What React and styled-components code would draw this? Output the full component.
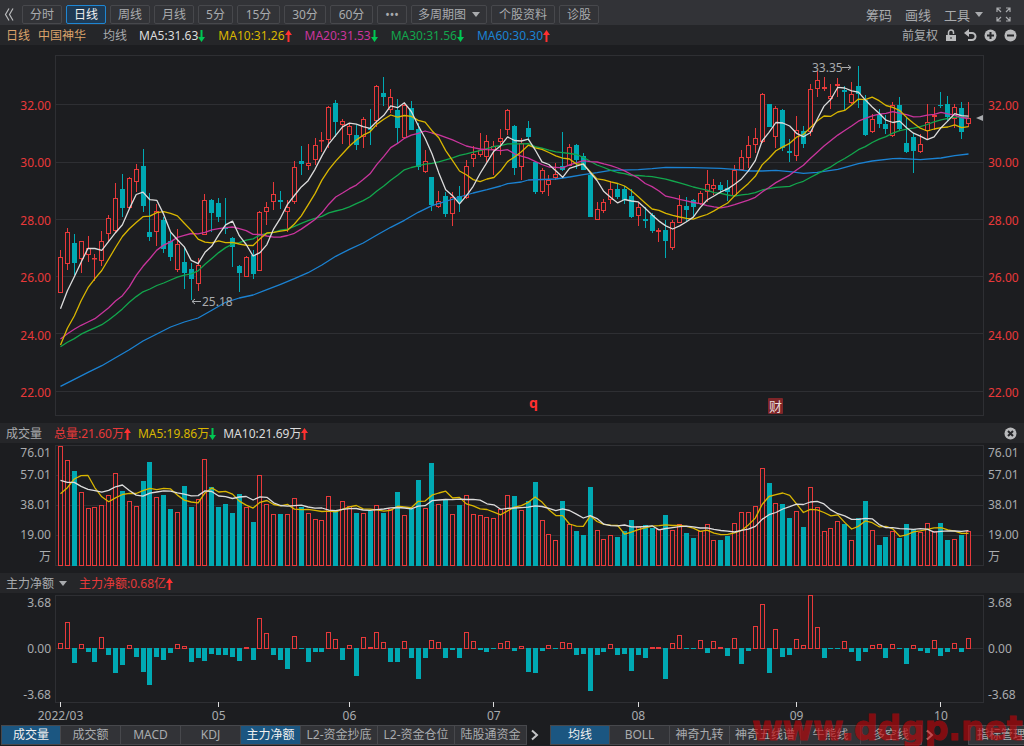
import React from 'react';
import styled, { createGlobalStyle, css } from 'styled-components';

const colors = {
  up: '#e8393a',
  down: '#00a9b3',
  text: '#a9abae',
  grid: '#2e2f33',
  yellow: '#d9b600',
  magenta: '#c9359d',
  green: '#12a74d',
  blue: '#1b82d2',
  white: '#dcdcdc'
};

const GlobalStyle = createGlobalStyle`
  * {
    box-sizing: border-box;
  }

  body {
    margin: 0;
    background: #1c1d20;
    color: ${colors.text};
    font: 12px/20px 'Noto Sans', 'Noto Sans CJK SC', sans-serif;
    overflow-x: hidden;
  }

  button {
    font: inherit;
    color: inherit;
    margin: 0;
    padding: 0;
    border: 0;
    background: none;
    white-space: nowrap;
    cursor: pointer;
  }
`;

const Page = styled.main`
  display: flex;
  flex-direction: column;
  min-height: 100vh;
  overflow: hidden;
`;

const Toolbar = styled.nav`
  display: flex;
  align-items: center;
  gap: 4px;
  height: 25px;
  padding: 4px 13px 0 4px;
  background: #323337;
`;

const CollapseButton = styled.button`
  display: flex;
  align-items: center;
  width: 14px;
  height: 19px;
`;

const PeriodButton = styled.button`
  display: flex;
  align-items: center;
  justify-content: center;
  gap: 6px;
  width: ${({ $width }) => $width}px;
  height: 19px;
  border: 1px solid #47484c;
  border-radius: 2px;
  ${({ $active }) => $active && css`
    border-color: #1e86d3;
    background: #1e3a54;
    color: #f0f0f0;
  `}
`;

const ToolGroup = styled.div`
  display: flex;
  align-items: center;
  gap: 13px;
  margin-left: auto;
  font-size: 13px;
`;

const ToolButton = styled.button`
  display: flex;
  align-items: center;
  gap: 5px;
`;

const Caret = styled.span`
  border: 4px solid transparent;
  border-top: 5px solid ${colors.text};
  border-bottom: 0;
`;

const InfoBar = styled.header`
  display: flex;
  align-items: center;
  gap: 12px;
  height: 20px;
  padding: 1px 7px 0 6px;
  background: #252629;
  white-space: nowrap;
`;

const StockName = styled.span`
  display: flex;
  gap: 8px;
  margin-right: 5px;
  color: #dba36b;
`;

const Legend = styled.div`
  display: flex;
  gap: ${({ $gap }) => $gap}px;
`;

const Value = styled.span`
  display: flex;
  align-items: center;
  color: ${({ $color }) => $color};
`;

const InfoActions = styled.div`
  display: flex;
  align-items: center;
  gap: 7px;
  margin-left: auto;
`;

const IconButton = styled.button`
  display: flex;
`;

const Panel = styled.section`
  display: grid;
  grid-template-columns: 55px minmax(0, 1fr) 40px;
  height: ${({ $height }) => $height}px;
`;

const Axis = styled.div`
  display: grid;
  align-items: center;
  align-content: ${({ $rows }) => ($rows ? 'start' : 'space-between')};
  grid-template-rows: ${({ $rows }) => $rows || 'none'};
  grid-auto-rows: 20px;
  padding: ${({ $top }) => $top || 0}px 4px ${({ $bottom }) => $bottom || 0}px;
  text-align: ${({ $side }) => $side};
  color: ${({ $color }) => $color || colors.text};
`;

const Plot = styled.svg`
  display: block;
  width: 100%;
  height: ${({ $height }) => $height}px;
  overflow: visible;
`;

const Footer = styled.footer`
  position: relative;
  display: flex;
  align-items: center;
  height: 20px;
  padding-left: 1px;
`;

const Tabs = styled.div`
  display: flex;
  flex: none;
  border: 1px solid #47484c;
`;

const Tab = styled.button`
  width: ${({ $width }) => $width}px;
  height: 18px;
  line-height: 18px;
  border-right: 1px solid #47484c;
  background: #323337;
  ${({ $active }) => $active && css`
    background: #1b5681;
    color: #f0f0f0;
  `}

  &:last-child {
    border-right: 0;
  }
`;

const MoreButton = styled.button`
  display: flex;
  flex: none;
  align-items: center;
  padding-left: 4px;
  width: ${({ $width }) => $width}px;
  height: 18px;
`;

const ManageButton = styled.button`
  flex: none;
  width: 66px;
  height: 20px;
  line-height: 18px;
  margin-left: 28px;
  border: 1px solid #47484c;
  background: #323337;
`;

const Watermark = styled.span`
  position: absolute;
  left: 752px;
  bottom: 0;
  color: #c00408;
  font: bold 33px/33px 'DejaVu Sans', sans-serif;
  -webkit-text-stroke: 1px #c00408;
  opacity: 0.62;
  pointer-events: none;
`;

const periods = [
  { label: '分时', width: 40 },
  { label: '日线', width: 40, active: true },
  { label: '周线', width: 40 },
  { label: '月线', width: 40 },
  { label: '5分', width: 35 },
  { label: '15分', width: 43 },
  { label: '30分', width: 42 },
  { label: '60分', width: 43 },
  { label: '•••', width: 30 },
  { label: '多周期图', width: 76, caret: true },
  { label: '个股资料', width: 64 },
  { label: '诊股', width: 40 }
];

const averages = [
  { label: 'MA5:31.63', color: colors.white },
  { label: 'MA10:31.26', color: colors.yellow, up: true },
  { label: 'MA20:31.53', color: colors.magenta },
  { label: 'MA30:31.56', color: colors.green },
  { label: 'MA60:30.30', color: colors.blue, up: true }
];

const volumeAverages = [
  { label: '总量:21.60万', color: colors.up, up: true },
  { label: 'MA5:19.86万', color: colors.yellow },
  { label: 'MA10:21.69万', color: colors.white, up: true }
];

const indicatorTabs = [
  { label: '成交量', width: 59, active: true },
  { label: '成交额', width: 60 },
  { label: 'MACD', width: 60 },
  { label: 'KDJ', width: 60 },
  { label: '主力净额', width: 60, active: true },
  { label: 'L2-资金抄底', width: 77 },
  { label: 'L2-资金仓位', width: 77 },
  { label: '陆股通资金', width: 71 }
];

const overlayTabs = [
  { label: '均线', width: 59, active: true },
  { label: 'BOLL', width: 60 },
  { label: '神奇九转', width: 60 },
  { label: '神奇五线谱', width: 71 },
  { label: '牛熊线', width: 60 },
  { label: '多空线', width: 60 }
];

const months = [[0, '2022/03'], [23, '05'], [42, '06'], [63, '07'], [84, '08'], [107, '09'], [128, '10']];

// Series values are distances down from the panel origin, three units to a pixel.
const UNIT = 3;

// direction, high, low, body top, body bottom
const candles = `
r 600 728 620 728|r 535 660 547 643|g 552 676 578 640|r 573 668 573 628|r 558 636 594 616|r 613 692 624 627
r 543 648 573 634|r 496 573 505 553|r 399 545 445 542|g 372 500 417 475|r 381 478 385 475|r 342 426 358 397
g 298 487 349 468|g 428 572 547 560|r 463 587 484 545|g 500 608 511 596|g 548 634 572 622|r 537 665 583 661
g 592 716 637 668|g 640 749 658 687|r 624 722 646 701|r 432 556 451 554|g 448 546 449 490|g 443 516 460 500
g 445 552 532 536|g 560 650 565 590|g 646 725 647 670|r 618 682 622 680|g 600 686 615 672|r 484 664 485 662
r 455 525 470 485|r 396 480 433 457|g 423 476 449 457|r 450 545 470 486|r 334 462 352 455|g 289 375 334 342
r 283 360 340 347|r 265 345 286 329|r 245 306 269 273|r 168 293 170 269|g 151 262 160 215|r 208 282 214 224
r 222 285 229 254|g 224 300 255 284|r 202 293 208 262|g 177 284 235 239|r 106 230 109 212|g 80 168 130 140
r 118 188 142 179|g 148 280 181 235|r 160 268 166 265|g 154 240 175 239|g 220 360 238 350|r 300 370 334 365
g 381 484 382 466|r 422 474 454 472|g 425 502 438 492|r 426 528 440 491|g 407 487 438 455|r 329 448 347 445
r 288 350 311 326|r 248 320 300 314|r 255 335 272 320|r 272 376 288 300|r 237 316 265 277|r 177 254 179 241
g 225 375 229 353|r 263 390 280 352|g 213 272 234 260|g 332 431 337 425|r 355 431 361 425|r 376 437 391 406
r 340 390 373 383|g 245 364 349 359|r 283 349 290 347|g 283 357 284 329|g 308 360 317 359|g 370 502 375 501
r 455 510 478 509|r 446 490 457 482|r 394 463 418 451|g 400 447 417 440|g 407 463 417 449|g 417 503 438 501
r 458 528 470 499|g 470 533 508 513|g 488 548 495 542|r 533 575 541 545|g 510 623 541 572|r 511 600 517 593
r 434 520 466 518|g 441 515 467 480|g 448 502 449 471|r 423 465 430 462|r 360 455 403 427|r 387 435 406 416
g 395 430 405 419|g 389 453 414 425|r 345 440 361 437|r 300 361 322 359|r 257 355 286 325|r 234 308 265 286
r 130 280 131 277|g 162 232 163 230|r 168 293 175 262|g 177 304 181 294|g 268 336 302 310|r 198 333 241 318
g 228 293 243 281|r 101 258 116 247|r 64 142 91 118|r 81 123 112 116|r 103 178 139 147|r 83 142 102 107
g 108 180 119 126|r 97 163 133 158|g 47 174 107 132|g 136 257 150 256|r 192 248 208 247|g 178 233 192 221
g 195 251 222 236|r 157 262 166 259|g 141 242 166 236|g 200 310 280 307|g 248 369 262 303|r 253 308 281 307
r 163 270 217 242|r 171 240 196 200|g 126 174 164 168|g 138 212 163 201|r 163 234 172 208|g 156 266 175 247
r 156 232 205 223`
  .trim()
  .split(/[|\n]/)
  .map((entry) => {
    const [dir, ...values] = entry.split(' ');
    const [high, low, top, bottom] = values.map(Number);
    return { up: dir === 'r', high, low, top, bottom };
  });

// closes before the first visible day, needed by the longer averages
const earlierCloses = [
  940, 974, 967, 898, 898, 847, 929, 929, 989, 989,
  867, 900, 813, 794, 824, 893, 845, 845, 795, 914,
  1047, 1010, 1033, 984, 896, 817, 850, 788, 805
];

const ma60 = [
  [0, 1009], [2, 988], [4, 967], [6, 947], [8, 923], [10, 899], [12, 873], [14, 852], [16, 831],
  [18, 816], [20, 804], [22, 781], [24, 757], [26, 744], [28, 735], [30, 719], [32, 703], [34, 686],
  [36, 668], [38, 645], [40, 619], [42, 598], [44, 579], [46, 555], [48, 532], [50, 511], [52, 487],
  [54, 467], [56, 454], [58, 441], [60, 429], [62, 419], [64, 408], [65, 401], [67, 396], [68, 390],
  [72, 387], [74, 381], [76, 374], [78, 368], [80, 361], [84, 359], [86, 356], [88, 352], [92, 353],
  [96, 355], [98, 358], [100, 363], [102, 363], [104, 361], [106, 365], [108, 370], [110, 367],
  [113, 358], [116, 341], [118, 333], [121, 326], [122, 325], [125, 329], [128, 324], [130, 317], [132, 312]
];

const volumes = [
  77, 121, 152, 217, 265, 262, 256, 226, 159, 214, 244, 259, 184, 125, 232, 226, 267, 277, 199, 261,
  238, 118, 202, 261, 252, 279, 223, 261, 306, 165, 253, 283, 282, 283, 235, 261, 280, 297, 300, 229,
  271, 244, 259, 279, 280, 274, 256, 278, 268, 217, 286, 267, 181, 265, 129, 253, 240, 283, 256, 226,
  283, 286, 292, 295, 266, 224, 229, 271, 244, 187, 301, 343, 359, 244, 313, 332, 346, 202, 330, 356,
  344, 350, 332, 300, 319, 316, 324, 327, 286, 330, 313, 338, 355, 333, 313, 359, 361, 349, 310, 277,
  277, 259, 145, 190, 248, 253, 293, 274, 320, 200, 260, 334, 325, 304, 313, 359, 294, 244, 331, 374,
  352, 332, 355, 311, 328, 337, 310, 332, 308, 361, 356, 344, 332
];
const earlierVolumes = [61, 152, 97, 175, 222, 211, 282, 267, 268];

const FLOW_ZERO = 235;
const flows = [
  219, 157, 280, 222, 245, 277, 201, 254, 310, 286, 225, 260, 307, 345, 260, 271, 250, 222, 229, 277,
  263, 274, 253, 256, 256, 260, 274, 231, 271, 145, 190, 254, 269, 296, 199, 236, 275, 245, 245, 187,
  207, 271, 225, 319, 201, 231, 187, 216, 275, 275, 213, 263, 327, 263, 210, 216, 263, 241, 263, 187,
  213, 241, 245, 238, 219, 213, 242, 228, 306, 310, 242, 226, 236, 216, 219, 254, 251, 362, 254, 245,
  222, 254, 251, 303, 254, 263, 231, 231, 327, 219, 195, 238, 236, 210, 248, 213, 231, 257, 205, 283,
  242, 169, 101, 310, 178, 260, 254, 207, 225, 74, 172, 263, 238, 238, 213, 245, 274, 245, 225, 222,
  265, 222, 238, 283, 225, 242, 248, 210, 257, 245, 219, 245, 205
];

const PLOT_WIDTH = 929;
const xAt = (i) => 5.5 + (i * 908) / 132;
const px = (value) => Math.round(value / UNIT);

const toPoints = (pairs) => pairs.map(([i, y]) => `${xAt(i).toFixed(1)},${(y / UNIT).toFixed(1)}`).join(' ');

const movingAverage = (earlier, values, days) => {
  const all = [...earlier, ...values];
  return values.map((_, i) => {
    const end = i + earlier.length + 1;
    const sum = all.slice(end - days, end).reduce((a, b) => a + b, 0);
    return [i, sum / days];
  });
};

const Line = ({ pairs, color }) => (
  <polyline points={toPoints(pairs)} fill="none" stroke={color} strokeWidth="1.3" strokeLinejoin="round" />
);

const Bar = ({ index, top, bottom, up }) => {
  const left = Math.floor(xAt(index)) - 2;
  const height = Math.max(bottom - top, 1);
  return up ? (
    <rect
      x={left + 0.5}
      y={top + 0.5}
      width="4"
      height={Math.max(height - 1, 0.5)}
      fill="#1c1d20"
      stroke={colors.up}
    />
  ) : (
    <rect x={left} y={top} width="5" height={height} fill={colors.down} />
  );
};

const Frame = ({ top, bottom, lines = [] }) => (
  <g fill="none" stroke={colors.grid} shapeRendering="crispEdges">
    <rect x="0.5" y={top + 0.5} width={PLOT_WIDTH - 1} height={bottom - top} />
    {lines.map((y) => (
      <path key={y} d={`M1 ${y + 0.5}H${PLOT_WIDTH - 1}`} />
    ))}
  </g>
);

const Arrow = ({ up }) => (
  <svg width="7" height="12" viewBox="0 0 7 12" aria-hidden="true">
    <path
      d={up ? 'M3.5 0 7 5H4.5V12h-2V5H0Z' : 'M3.5 12 0 7h2.5V0h2v7H7Z'}
      fill={up ? '#ff3030' : '#00c853'}
    />
  </svg>
);

const Chevron = () => (
  <svg width="8" height="12" viewBox="0 0 8 12" fill="none" stroke="#c4c5c7" strokeWidth="2">
    <path d="m1 1.5 5 4.5-5 4.5" />
  </svg>
);

const RoundIcon = ({ mark }) => (
  <svg width="13" height="13" viewBox="0 0 13 13">
    <circle cx="6.5" cy="6.5" r="6" fill="#b9babc" />
    <path d={mark} stroke="#252629" strokeWidth="2" fill="none" />
  </svg>
);

const Values = ({ items, gap }) => (
  <Legend $gap={gap}>
    {items.map((item) => (
      <Value key={item.label} $color={item.color}>{item.label}<Arrow up={item.up} /></Value>
    ))}
  </Legend>
);

const TabStrip = ({ tabs }) => (
  <Tabs>
    {tabs.map((tab) => (
      <Tab key={tab.label} type="button" $width={tab.width} $active={tab.active}>{tab.label}</Tab>
    ))}
  </Tabs>
);

const ScaleLabels = ({ labels, ...rest }) => (
  <Axis {...rest}>
    {labels.map((label) => <span key={label}>{label}</span>)}
  </Axis>
);

const PricePanel = () => {
  const labels = ['32.00', '30.00', '28.00', '26.00', '24.00', '22.00'];
  const closes = candles.map((c) => (c.up ? c.top : c.bottom));
  const axis = { labels, $top: 51, $bottom: 20, $color: colors.up };

  return (
    <Panel $height={378}>
      <ScaleLabels {...axis} $side="right" />
      <Plot $height={378} viewBox={`0 0 ${PLOT_WIDTH} 378`} preserveAspectRatio="none">
        <g transform="translate(0 5)">
          <Frame top={5} bottom={365} lines={[54, 112, 169, 226, 283, 341]} />
          {candles.map((c, i) => (
            <g key={i}>
              <rect
                x={Math.floor(xAt(i))}
                y={px(c.high)}
                width="1"
                height={px(c.low) - px(c.high)}
                fill={c.up ? colors.up : colors.down}
              />
              <Bar index={i} top={px(c.top)} bottom={px(c.bottom)} up={c.up} />
            </g>
          ))}
          <Line pairs={ma60} color={colors.blue} />
          <Line pairs={movingAverage(earlierCloses, closes, 30)} color={colors.green} />
          <Line pairs={movingAverage(earlierCloses, closes, 20)} color={colors.magenta} />
          <Line pairs={movingAverage(earlierCloses, closes, 10)} color={colors.yellow} />
          <Line pairs={movingAverage(earlierCloses, closes, 5)} color={colors.white} />
          <g fill={colors.text}>
            <text x="147" y="256">25.18</text>
            <path d="M137 251.5h9M140 249l-3 2.5 3 2.5" fill="none" stroke={colors.text} />
            <text x="757" y="22">33.35</text>
            <path d="M787 17.5h9M793 15l3 2.5-3 2.5" fill="none" stroke={colors.text} />
            <path d="m921 68 7-3v6Z" />
          </g>
          <text x="474" y="358" fill="#ff3030" fontSize="14" fontWeight="bold">q</text>
          <rect x="713" y="348" width="15" height="16" rx="1" fill="#7e2528" />
          <text x="714" y="361" fill="#e8dcdc" fontSize="13">财</text>
        </g>
      </Plot>
      <ScaleLabels {...axis} $side="left" />
    </Panel>
  );
};

const VolumePanel = () => {
  const axis = { labels: ['76.01', '57.01', '38.01', '19.00', '万'], $rows: '20px 24px 36px 24px 20px' };

  return (
    <Panel $height={130}>
      <ScaleLabels {...axis} $side="right" />
      <Plot $height={130} viewBox={`0 0 ${PLOT_WIDTH} 130`} preserveAspectRatio="none">
        <g transform="translate(0 -23)">
          <Frame top={25} bottom={145} lines={[55, 85, 115]} />
          {volumes.map((v, i) => (
            <Bar key={i} index={i} top={px(v)} bottom={146} up={candles[i].up} />
          ))}
          <Line pairs={movingAverage(earlierVolumes, volumes, 5)} color={colors.yellow} />
          <Line pairs={movingAverage(earlierVolumes, volumes, 10)} color={colors.white} />
        </g>
      </Plot>
      <ScaleLabels {...axis} $side="left" />
    </Panel>
  );
};

const FlowPanel = () => {
  const axis = { labels: ['3.68', '0.00', '-3.68'], $bottom: 20 };
  const zero = px(FLOW_ZERO);

  return (
    <Panel $height={132}>
      <ScaleLabels {...axis} $side="right" />
      <Plot $height={132} viewBox={`0 0 ${PLOT_WIDTH} 132`} preserveAspectRatio="none">
        <g transform="translate(0 -23)">
          <Frame top={25} bottom={132} lines={[zero]} />
          {flows.map((v, i) => {
            const up = v < FLOW_ZERO;
            return <Bar key={i} index={i} top={up ? px(v) : zero} bottom={up ? zero + 1 : px(v)} up={up} />;
          })}
          {months.map(([i, label]) => (
            <g key={label} fill={colors.text}>
              <rect x={Math.floor(xAt(i))} y="132" width="1" height="5" fill={colors.white} />
              <text x={xAt(i)} y="150" textAnchor="middle">{label}</text>
            </g>
          ))}
        </g>
      </Plot>
      <ScaleLabels {...axis} $side="left" />
    </Panel>
  );
};

const App = () => (
  <>
    <GlobalStyle />
    <Page>
      <Toolbar>
        <CollapseButton type="button" aria-label="Collapse">
          <svg width="10" height="13" viewBox="0 0 10 13" fill="none" stroke="#b9babc" strokeWidth="1.2">
            <path d="M5 .5 1.5 6.5l3.5 6M9 .5 5.5 6.5l3.5 6" />
          </svg>
        </CollapseButton>
        {periods.map((p) => (
          <PeriodButton key={p.label} type="button" $width={p.width} $active={p.active}>
            {p.label}
            {p.caret && <Caret />}
          </PeriodButton>
        ))}
        <ToolGroup>
          <ToolButton type="button">筹码</ToolButton>
          <ToolButton type="button">画线</ToolButton>
          <ToolButton type="button">工具<Caret /></ToolButton>
          <IconButton type="button" aria-label="Full screen">
            <svg width="15" height="15" viewBox="0 0 15 15" fill="none" stroke="#a9abae" strokeWidth="1.2">
              <path d="M1 5V1h4M10 1h4v4M14 10v4h-4M5 14H1v-4M1 1l4 4M14 1l-4 4M14 14l-4-4M1 14l4-4" />
            </svg>
          </IconButton>
        </ToolGroup>
      </Toolbar>

      <InfoBar>
        <StockName><span>日线</span><span>中国神华</span></StockName>
        <span>均线</span>
        <Values items={averages} gap={13} />
        <InfoActions>
          <span>前复权</span>
          <IconButton type="button" aria-label="Lock">
            <svg width="12" height="13" viewBox="0 0 12 13">
              <path d="M3.5 6V3.5a2.5 2.5 0 0 1 5 0V5" fill="none" stroke="#b9babc" strokeWidth="1.5" />
              <path d="M1 6h10v6H1Z" fill="#b9babc" />
              <path d="M5.5 8h1v2h-1Z" fill="#252629" />
            </svg>
          </IconButton>
          <IconButton type="button" aria-label="Undo">
            <svg width="13" height="13" viewBox="0 0 13 13">
              <path d="M3 4h5a3.5 3.5 0 0 1 0 7H4" fill="none" stroke="#b9babc" strokeWidth="2" />
              <path d="M5 0v8L0 4Z" fill="#b9babc" />
            </svg>
          </IconButton>
          <IconButton type="button" aria-label="Zoom in"><RoundIcon mark="M3 6.5h7M6.5 3v7" /></IconButton>
          <IconButton type="button" aria-label="Zoom out"><RoundIcon mark="M3 6.5h7" /></IconButton>
        </InfoActions>
      </InfoBar>
      <PricePanel />

      <InfoBar>
        <span>成交量</span>
        <Values items={volumeAverages} gap={7} />
        <InfoActions>
          <IconButton type="button" aria-label="Close"><RoundIcon mark="m4 4 5 5M9 4l-5 5" /></IconButton>
        </InfoActions>
      </InfoBar>
      <VolumePanel />

      <InfoBar>
        <ToolButton type="button">主力净额<Caret /></ToolButton>
        <Value $color={colors.up}>主力净额:0.68亿<Arrow up /></Value>
      </InfoBar>
      <FlowPanel />

      <Footer>
        <TabStrip tabs={indicatorTabs} />
        <MoreButton type="button" aria-label="More indicators" $width={23}><Chevron /></MoreButton>
        <TabStrip tabs={overlayTabs} />
        <MoreButton type="button" aria-label="More overlays" $width={18}><Chevron /></MoreButton>
        <ManageButton type="button">指标管理</ManageButton>
        <Watermark>www.ddgp.net</Watermark>
      </Footer>
    </Page>
  </>
);

export default App;
